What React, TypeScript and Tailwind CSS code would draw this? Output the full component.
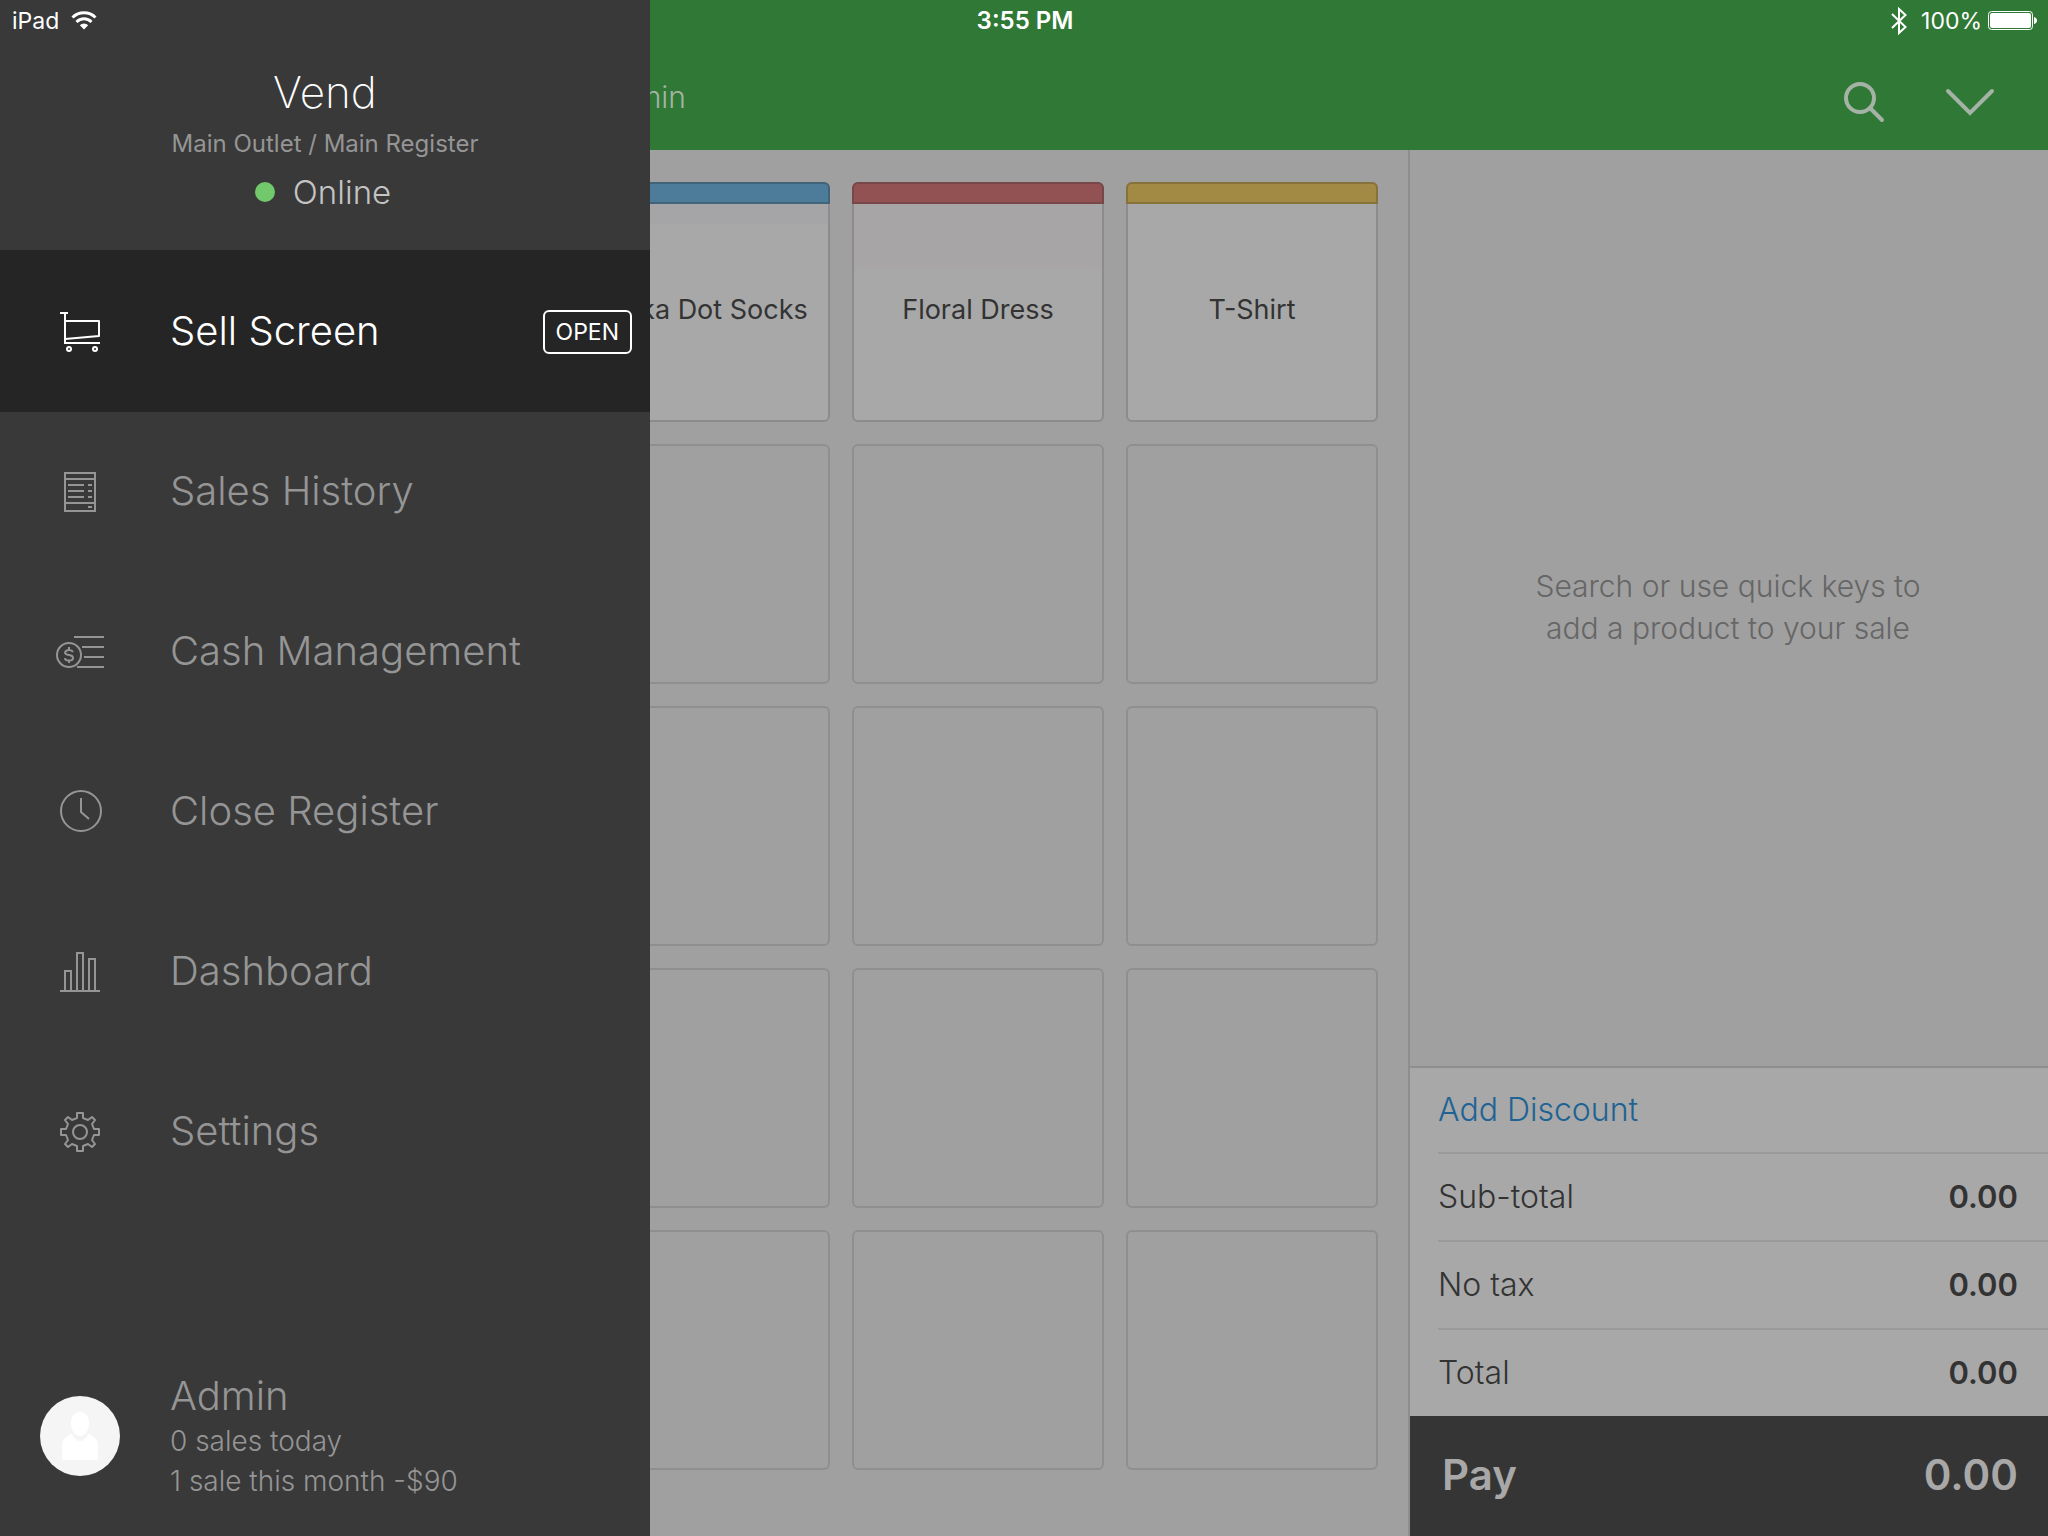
import React from "react";

const nav = [
  { label: "Sales History", icon: ReceiptIcon },
  { label: "Cash Management", icon: CashIcon },
  { label: "Close Register", icon: ClockIcon },
  { label: "Dashboard", icon: ChartIcon },
  { label: "Settings", icon: GearIcon },
];

function CartIcon() {
  return (
    <svg width="48" height="48" viewBox="0 0 48 48" fill="none" stroke="currentColor" strokeWidth="2" aria-hidden="true">
      <path d="M4 6h8M9 6v30h35" />
      <path d="M9 14h34v15L9 32" strokeLinejoin="round" />
      <circle cx="13" cy="42" r="2" />
      <circle cx="39" cy="42" r="2" />
    </svg>
  );
}

function ReceiptIcon() {
  return (
    <svg width="48" height="48" viewBox="0 0 48 48" fill="none" stroke="currentColor" strokeWidth="2" aria-hidden="true">
      <path d="M9 5h30v38H9zM9 11h30M9 35h30" />
      <path d="M12 17h16M12 23h16M12 29h16M32 17h4M32 23h4M32 29h4M32 39h4" />
    </svg>
  );
}

function CashIcon() {
  return (
    <svg width="48" height="48" viewBox="0 0 48 48" fill="none" stroke="currentColor" strokeWidth="2" aria-hidden="true">
      <circle cx="13" cy="27" r="12" />
      <path d="M18 9h30M26 19h22M28 29h20M21 39h27" />
      <path d="M17 24q-1-2-4-2t-4 2.500q0 2 4 2.500t4 3q0 2.500-4 2.500t-4-2.500M13 19v3M13 32v3" />
    </svg>
  );
}

function ClockIcon() {
  return (
    <svg width="48" height="48" viewBox="0 0 48 48" fill="none" stroke="currentColor" strokeWidth="2" aria-hidden="true">
      <circle cx="25" cy="23" r="20" />
      <path d="M25 10v14l8 7" />
    </svg>
  );
}

function ChartIcon() {
  return (
    <svg width="48" height="48" viewBox="0 0 48 48" fill="none" stroke="currentColor" strokeWidth="2" aria-hidden="true">
      <path d="M4 43h40M9 43V23h6v20M21 43V5h6v38M33 43V11h6v32" />
    </svg>
  );
}

function GearIcon() {
  return (
    <svg width="48" height="48" viewBox="0 0 48 48" fill="none" stroke="currentColor" strokeWidth="2" strokeLinejoin="round" aria-hidden="true">
      <path d="M21 5h6v5l5 2 4-3 3 3-3 4 2 5h5v6h-5l-2 5 3 4-3 3-4-3-5 2v5h-6v-5l-5-2-4 3-3-3 3-4-2-5H5v-6h5l2-5-3-4 3-3 4 3 5-2z" />
      <circle cx="24" cy="24" r="7" />
    </svg>
  );
}

function WifiIcon() {
  return (
    <svg width="26" height="20" viewBox="0 0 26 20" fill="none" stroke="currentColor" aria-hidden="true">
      <path d="M1.500 6.500a16.500 16.500 0 0 1 23 0M5.500 11a10.500 10.500 0 0 1 15 0" strokeWidth="3" />
      <path d="M13 18.500 8.800 14.200a6 6 0 0 1 8.400 0z" fill="currentColor" stroke="none" />
    </svg>
  );
}

function BluetoothIcon() {
  return (
    <svg width="16" height="28" viewBox="0 0 16 28" fill="none" stroke="currentColor" strokeWidth="2" aria-hidden="true">
      <path d="M1 7l13.500 13L8 26V2l6.500 6L1 21" />
    </svg>
  );
}

function BatteryIcon() {
  return (
    <svg width="50" height="20" viewBox="0 0 50 20" aria-hidden="true">
      <rect x="0.500" y="0.500" width="44" height="18" rx="3" fill="none" stroke="currentColor" />
      <rect x="2" y="2" width="41" height="15" rx="2" fill="currentColor" />
      <path d="M46 6q3 1 3 3.500T46 13z" fill="currentColor" />
    </svg>
  );
}

function SearchIcon() {
  return (
    <svg width="44" height="44" viewBox="0 0 44 44" fill="none" stroke="currentColor" strokeWidth="4" strokeLinecap="round" aria-hidden="true">
      <circle cx="18" cy="18" r="14" />
      <path d="M28 28l12 12" />
    </svg>
  );
}

function ChevronIcon() {
  return (
    <svg width="50" height="28" viewBox="0 0 50 28" fill="none" stroke="currentColor" strokeWidth="4" strokeLinecap="round" aria-hidden="true">
      <path d="M3 3l22 22L47 3" />
    </svg>
  );
}

function Avatar() {
  return (
    <svg width="80" height="80" viewBox="0 0 80 80" aria-hidden="true">
      <circle cx="40" cy="40" r="40" fill="#f5f5f5" />
      <path d="M40 16c-6 0-9 5-9 11 0 7 4 13 9 13s9-6 9-13c0-6-3-11-9-11z" fill="#fff" />
      <path d="M32 38c-7 2-10 6-10 13v11q0 2 2 2h32q2 0 2-2V51c0-7-3-11-10-13q-3 7-8 7t-8-7z" fill="#fff" />
    </svg>
  );
}

type Key = { label: string; bar: string; tint: string };

const keys: (Key | null)[] = [
  null,
  null,
  { label: "Polka Dot Socks", bar: "border-[#42647a] bg-[#4c7c9a]", tint: "h-[20px] bg-[#a5a5a8]" },
  { label: "Floral Dress", bar: "border-[#78474a] bg-[#925254]", tint: "h-[64px] bg-[#a8a5a6]" },
  { label: "T-Shirt", bar: "border-[#88723b] bg-[#a28a44]", tint: "h-0" },
  ...Array.from({ length: 20 }, () => null),
];

function QuickKey({ item }: { item: Key | null }) {
  if (!item) {
    return <button aria-label="Empty quick key" className="h-[240px] rounded-md border-2 border-[#8f8f8f]" />;
  }
  return (
    <button className="relative h-[240px] rounded-md border-2 border-[#8c8c8c] bg-[#a8a8a8] text-[27px] text-[#333]">
      <span className={"absolute -inset-x-0.5 -top-0.5 h-[22px] rounded-t-md border-2 " + item.bar} />
      <span className={"absolute inset-x-0 top-5 " + item.tint} />
      <span className="relative block pt-4 whitespace-nowrap">{item.label}</span>
    </button>
  );
}

const totals = ["Sub-total", "No tax", "Total"];

export default function App() {
  return (
    <div className="relative flex min-h-screen flex-col overflow-hidden bg-[#a0a0a0] font-['Inter',sans-serif] text-[#333]">
      <header className="flex h-[150px] items-start bg-[#2f7835] pt-10 text-[#a5b3a6]">
        <h2 className="w-[686px] pt-[37px] text-right text-[30px] leading-[40px] font-[350]">Admin</h2>
        <div className="ml-auto flex items-center gap-[59px] pt-10 pr-[53px]">
          <button aria-label="Search"><SearchIcon /></button>
          <button aria-label="More"><ChevronIcon /></button>
        </div>
      </header>

      <div className="flex flex-1">
        <main className="grid flex-1 grid-cols-5 content-start gap-[22px] px-[30px] py-8">
          {keys.map((item, i) => (
            <QuickKey key={i} item={item} />
          ))}
        </main>
        <section className="flex w-[640px] flex-col border-l-2 border-[#8e8e8e]">
          <p className="flex flex-1 items-center justify-center pr-0.5 pb-0.5 text-center text-[30px] leading-[42px] font-[350] text-[#666]">
            Search or use quick keys to
            <br />
            add a product to your sale
          </p>
          <div className="border-t-2 border-[#8e8e8e] bg-[#a8a8a8] pl-7 text-[32px] font-[350]">
            <button className="h-[84px] text-[#1f6394]">Add Discount</button>
            <dl>
              {totals.map((t) => (
                <div key={t} className="flex h-[88px] items-center justify-between border-t-2 border-[#9a9a9a] pr-[30px]">
                  <dt>{t}</dt>
                  <dd className="text-[31px] font-semibold">0.00</dd>
                </div>
              ))}
            </dl>
          </div>
          <button className="flex h-[120px] items-center justify-between bg-[#353535] pr-[30px] pb-1 pl-8 text-[42px] font-semibold text-[#a8a8a8]">
            <span>Pay</span>
            <span>0.00</span>
          </button>
        </section>
      </div>

      <aside className="absolute inset-y-0 left-0 flex w-[650px] flex-col bg-[#393939] font-[350] text-[#959595]">
        <div className="flex h-[250px] flex-col items-center pt-[63px]">
          <h1 className="text-[44px] leading-[58px] font-extralight text-white">Vend</h1>
          <p className="pt-[5px] text-[24px] leading-[36px] font-normal">Main Outlet / Main Register</p>
          <p className="flex items-center gap-[18px] pt-2 pr-1 text-[33px] leading-[44px] text-[#c4c4c4]">
            <span className="size-5 rounded-full bg-[#71c96c]" />
            Online
          </p>
        </div>
        <nav className="text-[40px]">
          <a href="#sell" className="flex h-[162px] items-center bg-[#252525] pr-[18px] pl-14 text-white">
            <CartIcon />
            <span className="flex-1 pl-[66px]">Sell Screen</span>
            <span className="mt-0.5 flex h-11 items-center rounded-md border-2 border-white px-[11px] text-[23px] font-normal">OPEN</span>
          </a>
          {nav.map(({ label, icon: Icon }) => (
            <a key={label} href="#menu" className="flex h-[160px] items-center pl-14">
              <Icon />
              <span className="pb-0.5 pl-[66px]">{label}</span>
            </a>
          ))}
        </nav>
        <div className="mt-auto flex items-center gap-[50px] pb-[35px] pl-10">
          <Avatar />
          <div className="text-[28px] leading-[40px]">
            <p className="text-[40px] leading-[50px]">Admin</p>
            <p>0 sales today</p>
            <p>1 sale this month -$90</p>
          </div>
        </div>
      </aside>

      <div className="absolute inset-x-0 top-0 flex h-[42px] items-center pr-[10px] pl-3 text-[23px] text-white">
        <div className="flex flex-1 items-center gap-3">
          iPad <WifiIcon />
        </div>
        <div className="text-[24px] font-semibold">3:55 PM</div>
        <div className="flex flex-1 items-center justify-end gap-1.5">
          <BluetoothIcon />
          <span className="pl-2">100%</span>
          <BatteryIcon />
        </div>
      </div>
    </div>
  );
}
